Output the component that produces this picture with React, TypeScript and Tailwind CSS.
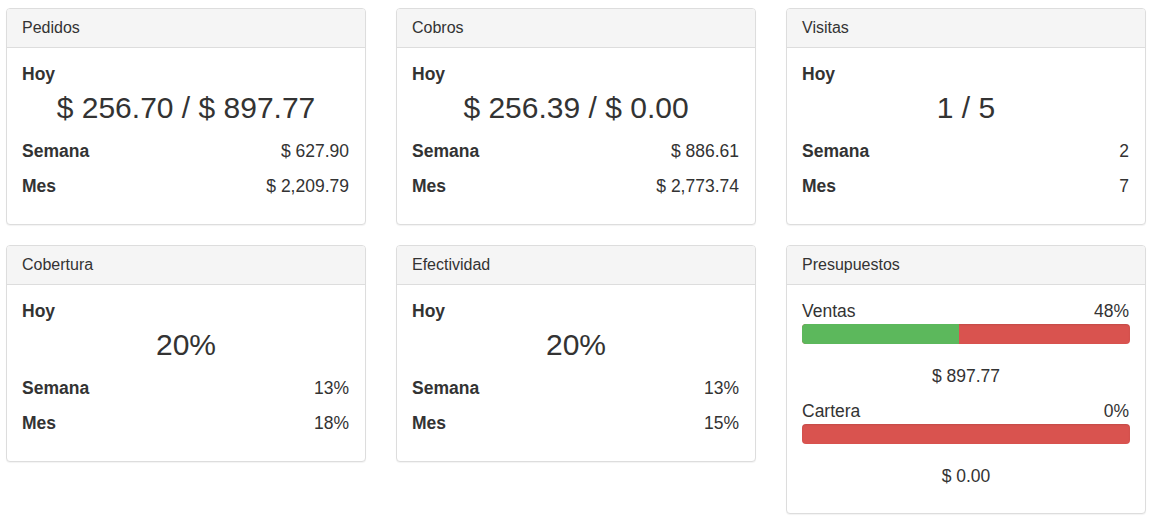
import React from "react";

type Stat = {
  title: string;
  today: string;
  week: string;
  month: string;
};

const stats: Stat[] = [
  { title: "Pedidos", today: "$ 256.70 / $ 897.77", week: "$ 627.90", month: "$ 2,209.79" },
  { title: "Cobros", today: "$ 256.39 / $ 0.00", week: "$ 886.61", month: "$ 2,773.74" },
  { title: "Visitas", today: "1 / 5", week: "2", month: "7" },
  { title: "Cobertura", today: "20%", week: "13%", month: "18%" },
  { title: "Efectividad", today: "20%", week: "13%", month: "15%" },
];

const budgets = [
  { label: "Ventas", pct: 48, amount: "$ 897.77" },
  { label: "Cartera", pct: 0, amount: "$ 0.00" },
];

function Panel({ title, children }: { title: string; children: React.ReactNode }) {
  return (
    <div className="rounded-[4px] border border-[#dddddd] bg-white shadow-[0_1px_1px_rgba(0,0,0,0.05)]">
      <div className="flex h-[39px] items-center rounded-t-[3px] border-b border-[#dddddd] bg-[#f5f5f5] px-[15px] text-[16px] text-[#333333]">
        {title}
      </div>
      <div className="px-[15px] pt-[14px] pb-[20px]">{children}</div>
    </div>
  );
}

function StatPanel({ stat }: { stat: Stat }) {
  return (
    <Panel title={stat.title}>
      <div className="flex h-[24px] items-center text-[17.5px] font-bold">Hoy</div>
      <div className="flex h-[42px] items-center justify-center text-[30px]">{stat.today}</div>
      <div className="mt-[6px] flex h-[35px] items-center justify-between text-[17.5px]">
        <span className="font-bold">Semana</span>
        <span className="pr-px">{stat.week}</span>
      </div>
      <div className="flex h-[35px] items-center justify-between text-[17.5px]">
        <span className="font-bold">Mes</span>
        <span className="pr-px">{stat.month}</span>
      </div>
    </Panel>
  );
}

function BudgetPanel() {
  return (
    <div className="rounded-[4px] border border-[#dddddd] bg-white shadow-[0_1px_1px_rgba(0,0,0,0.05)]">
      <div className="flex h-[39px] items-center rounded-t-[3px] border-b border-[#dddddd] bg-[#f5f5f5] px-[15px] text-[16px] text-[#333333]">
        Presupuestos
      </div>
      <div className="px-[15px] pt-[14px] pb-[14px] text-[17.5px]">
        {budgets.map((b) => (
          <div key={b.label} className="mb-[11px]">
            <div className="flex h-[25px] items-center justify-between">
              <span>{b.label}</span>
              <span className="pr-px">{b.pct}%</span>
            </div>
            <div className="flex h-[20px] overflow-hidden rounded-[4px] bg-[#d9534f] shadow-[inset_0_1px_2px_rgba(0,0,0,0.1)]">
              <div className="h-full bg-[#5cb85c]" style={{ width: `${b.pct}%` }} />
            </div>
            <div className="mt-[20px] flex h-[24px] items-center justify-center">{b.amount}</div>
          </div>
        ))}
      </div>
    </div>
  );
}

export default function App() {
  return (
    <div className="min-h-[518px] bg-white pt-[8px] pl-[6px] font-['Liberation_Sans',Arial,sans-serif] text-[#333333]">
      <div className="grid w-[1140px] grid-cols-3 items-start gap-x-[30px] gap-y-[20px]">
        {stats.map((s) => (
          <StatPanel key={s.title} stat={s} />
        ))}
        <BudgetPanel />
      </div>
    </div>
  );
}
